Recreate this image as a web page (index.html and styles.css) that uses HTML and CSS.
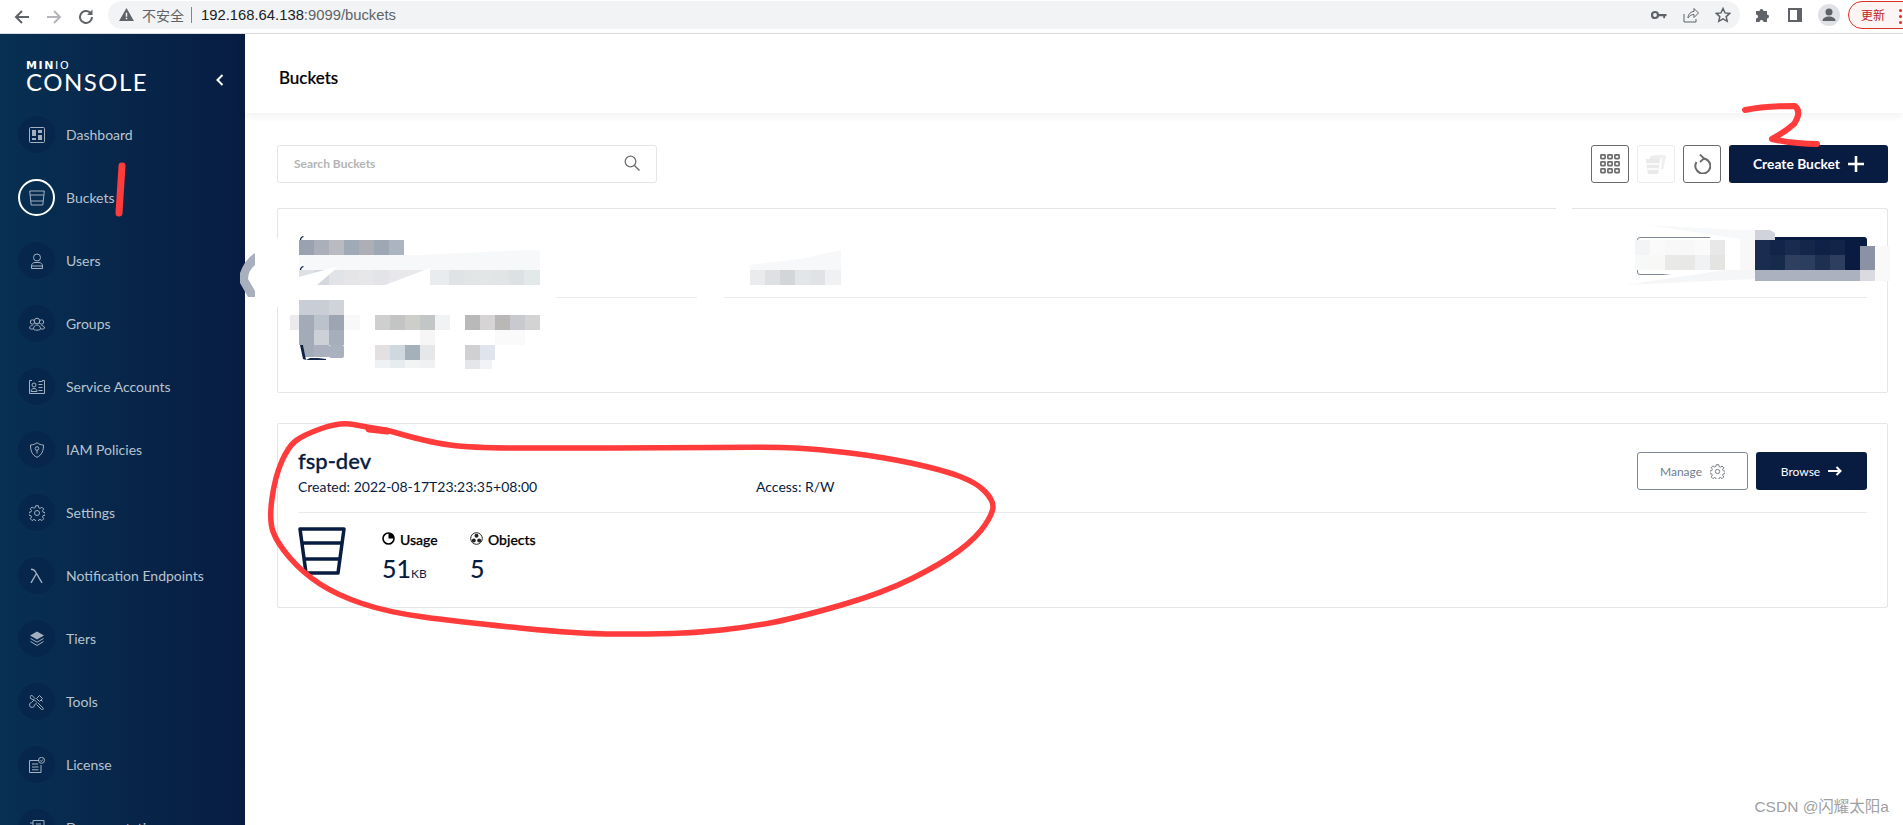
FILE: index.html
```html
<!DOCTYPE html>
<html lang="zh">
<head>
<meta charset="utf-8">
<title>MinIO Console</title>
<link rel="stylesheet" href="styles.css">
</head>
<body>
<header class="chrome">
  <div class="chrome-nav">
    <svg class="chrome-ico" viewBox="0 0 18 18"><path d="M16 9H3M9 3 3 9l6 6" fill="none" stroke="#5f6368" stroke-width="2"/></svg>
    <svg class="chrome-ico" viewBox="0 0 18 18"><path d="M2 9h13M9 3l6 6-6 6" fill="none" stroke="#b4b6b9" stroke-width="2"/></svg>
    <svg class="chrome-ico" viewBox="0 0 18 18"><path d="M15 9a6 6 0 1 1-1.800-4.300" fill="none" stroke="#5f6368" stroke-width="2"/><path d="M15.500 1.500v5.500H10z" fill="#5f6368"/></svg>
  </div>
  <div class="omnibox">
    <svg class="warn" viewBox="0 0 16 14"><path d="M8 0 16 14H0z" fill="#5f6368"/><path d="M7.200 5h1.600v4.500H7.200zM7.200 10.500h1.600V12H7.200z" fill="#f1f3f4"/></svg>
    <span class="insecure">不安全</span>
    <span class="url"><span class="host">192.168.64.138</span>:9099/buckets</span>
    <span class="omni-actions">
      <svg class="omni-ico" viewBox="0 0 16 16"><circle cx="4" cy="8" r="3" fill="none" stroke="#5f6368" stroke-width="2.200"/><path d="M7 7h8.500v2.200H14v2h-1.800V9.200H7z" fill="#5f6368"/></svg>
      <svg class="omni-ico" viewBox="0 0 16 16"><path d="M1 7v8h12v-3M5 11c0-4 3-6.500 6-6.500V1.500l4.500 4.500L11 10.500V7.500C8.500 7.500 6.500 8.500 5 11z" fill="none" stroke="#5f6368" stroke-width="1"/></svg>
      <svg class="omni-ico" viewBox="0 0 16 16"><path d="m8 1.500 2 4.400 4.800.5-3.600 3.200 1 4.700L8 11.900l-4.200 2.400 1-4.700L1.200 6.400 6 5.900z" fill="none" stroke="#5f6368" stroke-width="1.500"/></svg>
    </span>
  </div>
  <div class="chrome-right">
    <svg class="chrome-ico" viewBox="0 0 18 18"><path d="M2 5h3.500a2 2 0 1 1 4 0H13v3.500a2 2 0 1 1 0 4V16H9.500a2 2 0 1 0-4 0H2v-3.500a2 2 0 1 0 0-4z" fill="#5f6368"/></svg>
    <svg class="chrome-ico" viewBox="0 0 18 18"><rect x="2" y="2" width="14" height="14" fill="#5f6368"/><rect x="4" y="4" width="7" height="10" fill="#fff"/></svg>
    <span class="avatar"><svg class="avatar-ico" viewBox="0 0 22 22"><circle cx="11" cy="8" r="3.500" fill="#5f6368"/><path d="M4.500 17c0-3 3-4.500 6.500-4.500s6.500 1.500 6.500 4.500z" fill="#5f6368"/></svg></span>
    <span class="update">更新<span class="dots"><i></i><i></i><i></i></span></span>
  </div>
</header>

<div class="app">
  <aside class="sidebar">
    <div class="brand">
      <div class="logo">
        <div class="logo-minio">MIN<span class="logo-io">IO</span></div>
        <div class="logo-console">CONSOLE</div>
      </div>
      <svg class="collapse" viewBox="0 0 10 14"><path d="M7.500 2 2.500 7l5 5" fill="none" stroke="#fff" stroke-width="2"/></svg>
    </div>
    <nav class="nav">
      <a class="nav-item"><span class="nav-dot"><svg class="nav-ico" viewBox="0 0 16 16"><rect x=".5" y=".5" width="15" height="15" rx="1"/><rect class="solid" x="3" y="3" width="4" height="6"/><rect class="solid" x="9" y="3" width="4" height="3"/><rect class="solid" x="9" y="8" width="4" height="5"/><rect class="solid" x="3" y="11" width="4" height="2"/></svg></span>Dashboard</a>
      <a class="nav-item active"><span class="nav-dot"><svg class="nav-ico" viewBox="0 0 16 16"><path d="M.7 1h14.600l-1.500 14H2.200zM1.200 5h13.600M1.800 11h12.400"/></svg></span>Buckets</a>
      <a class="nav-item"><span class="nav-dot"><svg class="nav-ico" viewBox="0 0 16 16"><circle cx="8" cy="4.500" r="3.500"/><path d="M2.500 15.500v-2.500c0-2 1.500-3.500 3.500-3.500h4c2 0 3.500 1.500 3.500 3.500v2.500zM2.500 13h11"/></svg></span>Users</a>
      <a class="nav-item"><span class="nav-dot"><svg class="nav-ico" viewBox="0 0 16 16"><circle cx="8" cy="5" r="2.800"/><circle cx="3.500" cy="6" r="2.200"/><circle cx="12.500" cy="6" r="2.200"/><path d="M4.500 13c0-2.500 1.500-4 3.500-4s3.500 1.500 3.500 4c0 1.500-7 1.500-7 0zM3.500 9.500C2 9.500.5 10.500.5 12c0 1 2 1.200 3.500 1M12.500 9.500c1.500 0 3 1 3 2.500 0 1-2 1.200-3.500 1"/></svg></span>Groups</a>
      <a class="nav-item"><span class="nav-dot"><svg class="nav-ico" viewBox="0 0 16 16"><path d="M3 1.500H.5v13h15v-13H13"/><circle cx="5" cy="6" r="2"/><path d="M2 12.500c0-2 1.300-3 3-3s3 1 3 3zM9.500 2.500h4M9.500 5.500h4M9.500 8.500h4M9.500 11.500h4"/></svg></span>Service Accounts</a>
      <a class="nav-item"><span class="nav-dot"><svg class="nav-ico" viewBox="0 0 16 16"><path d="M8 .7c2 1.500 4 2.200 6.500 2.300 0 5.500-1.500 10-6.500 12.300C3 13 1.500 8.500 1.500 3 4 2.900 6 2.200 8 .7z"/><circle cx="8" cy="6.500" r="1.800"/><path d="M8 8v3.500"/></svg></span>IAM Policies</a>
      <a class="nav-item"><span class="nav-dot"><svg class="nav-ico" viewBox="0 0 16 16"><circle cx="8" cy="8" r="2.500"/><path d="m6.700.7h2.600l.4 2.100 1.400.6 1.800-1.200 1.800 1.800-1.200 1.800.6 1.400 2.100.4v2.600l-2.100.4-.6 1.400 1.200 1.800-1.800 1.800-1.800-1.200-1.400.6-.4 2.100H6.700l-.4-2.100-1.400-.6-1.800 1.200-1.800-1.800 1.200-1.800-.6-1.400-2.100-.4V7.400l2.100-.4.6-1.400L1.300 3.800l1.800-1.800 1.800 1.200 1.400-.6z"/></svg></span>Settings</a>
      <a class="nav-item"><span class="nav-dot"><svg class="nav-ico lambda" viewBox="0 0 16 16"><path d="M2 1.200c3 0 4 1 5.200 3.800L13 14.800M7.500 5.500 2 14.800"/></svg></span>Notification Endpoints</a>
      <a class="nav-item"><span class="nav-dot"><svg class="nav-ico" viewBox="0 0 16 16"><path class="solid" d="M8 .5 15 4.500 8 8.500 1 4.500z"/><path d="M1.500 7.500 8 11.200l6.500-3.700M1.500 10.500 8 14.500l6.500-4"/></svg></span>Tiers</a>
      <a class="nav-item"><span class="nav-dot"><svg class="nav-ico" viewBox="0 0 16 16"><path d="M2.500 1 6 4.500l-1 1L8 8.500l-2.500 2.500a2.500 2.500 0 1 1-3-2.500L5 6 1.500 4.500A3 3 0 0 1 2.500 1zM10.500 1.500l3 3-3 3-3-3zM9 9l5 5a1 1 0 0 1-1.500 1.500l-5-5M12 6l1.500 1.500"/></svg></span>Tools</a>
      <a class="nav-item"><span class="nav-dot"><svg class="nav-ico" viewBox="0 0 16 16"><path d="M10 3.500H.5v12H12V8M3 7h6M3 10h6.500M3 12.800h6.500"/><circle cx="12.500" cy="3.300" r="3"/><path d="m11 3.300 1.200 1.200 1.700-2"/></svg></span>License</a>
      <a class="nav-item"><span class="nav-dot"><svg class="nav-ico" viewBox="0 0 16 16"><path d="M4 .5h11v15H4zM7 4h5M7 7h5M7 10h5M4 3H1M4 6H1"/></svg></span>Documentation</a>
    </nav>
  </aside>

  <main class="main">
    <div class="page-head"><h1 class="page-title">Buckets</h1></div>
    <div class="content">
      <div class="actions">
        <label class="search">
          <span class="search-text">Search Buckets</span>
          <svg class="search-ico" viewBox="0 0 16 16"><circle cx="6.500" cy="6.500" r="5.300" fill="none" stroke="#6f6f6f" stroke-width="1.300"/><path d="m10.500 10.500 5 5" stroke="#6f6f6f" stroke-width="1.500"/></svg>
        </label>
        <div class="action-buttons">
          <button class="icon-btn"><svg class="grid-ico" viewBox="0 0 20 20"><g fill="none" stroke="#6d6d6d" stroke-width="1.700"><rect x=".9" y=".9" width="4.200" height="3.700" rx=".6"/><rect x="7.900" y=".9" width="4.200" height="3.700" rx=".6"/><rect x="14.900" y=".9" width="4.200" height="3.700" rx=".6"/><rect x=".9" y="7.900" width="4.200" height="3.700" rx=".6"/><rect x="7.900" y="7.900" width="4.200" height="3.700" rx=".6"/><rect x="14.900" y="7.900" width="4.200" height="3.700" rx=".6"/><rect x=".9" y="14.900" width="4.200" height="3.700" rx=".6"/><rect x="7.900" y="14.900" width="4.200" height="3.700" rx=".6"/><rect x="14.900" y="14.900" width="4.200" height="3.700" rx=".6"/></g></svg></button>
          <button class="icon-btn disabled"><svg class="stack-ico" viewBox="0 0 20 20"><path d="M6 1.500 15 .5l5 1-2.500 13-2.500 1L16 4z" fill="#efefef"/><path d="M4 2h10l1 2-1 2H4z" fill="#ededed"/><path d="M0 5h14l-1.800 15H1.800z" fill="#e9e9e9"/><path d="M.8 10h12.400M1.400 15h11.200" stroke="#fff" stroke-width="1.500"/></svg></button>
          <button class="icon-btn"><svg class="refresh-ico" viewBox="0 0 18 20"><path d="M10 4.500A7.500 7.500 0 1 1 3.500 8" fill="none" stroke="#6b6b6b" stroke-width="2"/><path d="M7 .5l4 4-4 3.500" fill="none" stroke="#6b6b6b" stroke-width="1.800"/></svg></button>
          <button class="create-btn">Create Bucket<svg class="plus-ico" viewBox="0 0 16 16"><path d="M8 0v16M0 8h16" stroke="#fff" stroke-width="2.600"/></svg></button>
        </div>
      </div>

      <section class="card">
        <div class="card-head">
          <div class="card-info"></div>
          <div class="card-buttons">
            <button class="btn-outline">Manage<svg class="gear-ico" viewBox="0 0 16 16"><circle cx="8" cy="8" r="2.300"/><path d="m6.700.7h2.600l.4 2.100 1.400.6 1.800-1.200 1.800 1.800-1.200 1.800.6 1.400 2.100.4v2.600l-2.100.4-.6 1.400 1.200 1.800-1.800 1.800-1.800-1.200-1.400.6-.4 2.100H6.700l-.4-2.100-1.400-.6-1.800 1.200-1.800-1.800 1.200-1.800-.6-1.400-2.100-.4V7.400l2.100-.4.6-1.400L1.300 3.800l1.800-1.800 1.800 1.200 1.400-.6z"/></svg></button>
            <button class="btn-dark">Browse<svg class="arrow-ico" viewBox="0 0 14 10"><path d="M0 5h12M8.500 1 12.500 5l-4 4" fill="none" stroke="#fff" stroke-width="2"/></svg></button>
          </div>
        </div>
      </section>

      <section class="card">
        <div class="card-head">
          <div class="card-info">
            <div class="bucket-name">fsp-dev</div>
            <div class="bucket-meta"><span class="meta-created">Created: 2022-08-17T23:23:35+08:00</span><span>Access: R/W</span></div>
          </div>
          <div class="card-buttons">
            <button class="btn-outline">Manage<svg class="gear-ico" viewBox="0 0 16 16"><circle cx="8" cy="8" r="2.300"/><path d="m6.700.7h2.600l.4 2.100 1.400.6 1.800-1.200 1.800 1.800-1.200 1.800.6 1.400 2.100.4v2.600l-2.100.4-.6 1.400 1.200 1.800-1.800 1.800-1.800-1.200-1.400.6-.4 2.100H6.700l-.4-2.100-1.400-.6-1.800 1.200-1.800-1.800 1.200-1.800-.6-1.400-2.100-.4V7.400l2.100-.4.6-1.400L1.300 3.800l1.800-1.800 1.800 1.200 1.400-.6z"/></svg></button>
            <button class="btn-dark">Browse<svg class="arrow-ico" viewBox="0 0 14 10"><path d="M0 5h12M8.500 1 12.500 5l-4 4" fill="none" stroke="#fff" stroke-width="2"/></svg></button>
          </div>
        </div>
        <div class="card-stats">
          <svg class="bucket-ico" viewBox="0 0 48 48"><path d="M2 2h44l-6 44H8zM4.500 16h39M6.500 32h35" fill="none" stroke="#081c42" stroke-width="3.500" stroke-linejoin="round"/></svg>
          <div class="stat">
            <div class="stat-label"><svg class="stat-ico" viewBox="0 0 13 13"><circle cx="6.500" cy="6.500" r="5.500" fill="none" stroke="#000" stroke-width="1.600"/><path d="M6.500 6.500V1a5.500 5.500 0 0 1 5.500 5.500z" fill="#000"/></svg>Usage</div>
            <div class="stat-value">51<span class="stat-unit">KB</span></div>
          </div>
          <div class="stat">
            <div class="stat-label"><svg class="stat-ico" viewBox="0 0 13 13"><circle cx="6.500" cy="6.500" r="5.800" fill="none" stroke="#222" stroke-width="1"/><circle cx="6.500" cy="3.800" r="2" fill="#222"/><circle cx="3.800" cy="8.500" r="2" fill="#222"/><circle cx="9.200" cy="8.500" r="2" fill="#222"/></svg>Objects</div>
            <div class="stat-value">5</div>
          </div>
        </div>
      </section>
    </div>
  </main>
</div>

<svg class="markup" viewBox="0 0 1903 825">
  <!-- redaction smears over the first card -->
  <g fill="#fff">
    <path d="M270 238H540l26 50-20 19H270z"/>
    <path d="M466 290h58v14h-58zM697 290h27v14h-27zM1556 204h16v8h-16z"/>
    <path d="M1707 231 1760 228 1773 237 1775 282 1645 285 1645 277 1725 268z"/>
  </g>
  <g fill="#f7f8f9">
    <path d="M299 255h120l110-5 11 1v19H299z"/>
    <path d="M750 270v-5l50-6 41-9v20z"/>
  </g>
  <g>
    <rect x="299" y="240" width="15" height="15" fill="#9aa1b0"/><rect x="314" y="240" width="15" height="15" fill="#abafba"/><rect x="329" y="240" width="15" height="15" fill="#b9bbc0"/><rect x="344" y="240" width="15" height="15" fill="#9faab6"/><rect x="359" y="240" width="15" height="15" fill="#aeaeb6"/><rect x="374" y="240" width="15" height="15" fill="#9ea8b5"/><rect x="389" y="240" width="15" height="15" fill="#adb4c1"/>
  </g>
  <g>
    <rect x="299" y="270" width="15" height="15" fill="#dde0e4"/><rect x="314" y="270" width="15" height="15" fill="#d4d8de"/><rect x="329" y="270" width="15" height="15" fill="#e2e3e6"/><rect x="344" y="270" width="15" height="15" fill="#e5e5e8"/><rect x="359" y="270" width="15" height="15" fill="#e7e7ea"/><rect x="374" y="270" width="15" height="15" fill="#e3e4e7"/><rect x="389" y="270" width="15" height="15" fill="#e8e7ea"/><rect x="404" y="270" width="15" height="15" fill="#e9e7ea"/><rect x="419" y="270" width="15" height="15" fill="#e9ecec"/><rect x="434" y="270" width="15" height="15" fill="#e9ecee"/><rect x="449" y="270" width="15" height="15" fill="#dfe3e5"/><rect x="464" y="270" width="15" height="15" fill="#e1e5e6"/><rect x="479" y="270" width="15" height="15" fill="#e3e6e7"/><rect x="494" y="270" width="15" height="15" fill="#e2e5e6"/><rect x="509" y="270" width="15" height="15" fill="#dde1e3"/><rect x="524" y="270" width="16" height="15" fill="#e3e8e8"/>
    <path d="M299 285v-8l40-11-22 19zM385 285l45-17v17z" fill="#fff"/>
    <rect x="750" y="270" width="15" height="15" fill="#eaebec"/><rect x="765" y="270" width="15" height="15" fill="#dfe0e3"/><rect x="780" y="270" width="15" height="15" fill="#d2d6d9"/><rect x="795" y="270" width="15" height="15" fill="#e3e6e8"/><rect x="810" y="270" width="15" height="15" fill="#e0e2e5"/><rect x="825" y="270" width="16" height="15" fill="#f0f1f2"/>
  </g>
  <g>
    <rect x="290" y="315" width="9" height="15" fill="#ebebed"/><rect x="344" y="315" width="16" height="15" fill="#f8f8f9"/>
    <rect x="299" y="300" width="15" height="15" fill="#c9cdd5"/><rect x="314" y="300" width="15" height="15" fill="#c9ced6"/><rect x="329" y="300" width="15" height="15" fill="#d0d3da"/>
    <rect x="299" y="315" width="15" height="15" fill="#a3abb8"/><rect x="314" y="315" width="15" height="15" fill="#bcc2cb"/><rect x="329" y="315" width="15" height="15" fill="#9ea5b2"/>
    <rect x="299" y="330" width="15" height="15" fill="#a3abb8"/><rect x="314" y="330" width="15" height="15" fill="#ccd1d8"/><rect x="329" y="330" width="15" height="15" fill="#a6aebb"/>
    <path d="M303 345h11v12h-9z" fill="#a3aab8"/><path d="M300 345l3 14 3 1-3-15z" fill="#0f2146"/><rect x="314" y="345" width="15" height="12" fill="#abb0bf"/><rect x="329" y="345" width="15" height="13" rx="2" fill="#aab1be"/><path d="M306 360h20v-1l-8-1h-8z" fill="#14274a"/>
    <rect x="375" y="315" width="15" height="15" fill="#cfcfcf"/><rect x="390" y="315" width="15" height="15" fill="#c3c5c5"/><rect x="405" y="315" width="15" height="15" fill="#cdcdc9"/><rect x="420" y="315" width="15" height="15" fill="#c3c6c6"/><rect x="435" y="315" width="15" height="15" fill="#f1f2f3"/>
    <rect x="420" y="330" width="15" height="15" fill="#f6f6f6"/>
    <rect x="375" y="345" width="15" height="15" fill="#e2e0e1"/><rect x="390" y="345" width="15" height="15" fill="#cfd8df"/><rect x="405" y="345" width="15" height="15" fill="#a4b0ba"/><rect x="420" y="345" width="15" height="15" fill="#e6e7e9"/>
    <rect x="375" y="360" width="15" height="8" fill="#f0f1f2"/><rect x="390" y="360" width="15" height="8" fill="#e7ecee"/><rect x="405" y="360" width="15" height="8" fill="#f2f4f3"/><rect x="420" y="360" width="15" height="8" fill="#f0f1f2"/>
    <rect x="465" y="315" width="15" height="15" fill="#b9b9b9"/><rect x="480" y="315" width="15" height="15" fill="#d6d4d5"/><rect x="495" y="315" width="15" height="15" fill="#bab8b6"/><rect x="510" y="315" width="15" height="15" fill="#c9cad0"/><rect x="525" y="315" width="15" height="15" fill="#d3d3d3"/>
    <rect x="495" y="330" width="30" height="15" fill="#fafafa"/>
    <rect x="465" y="345" width="15" height="15" fill="#d0d0d2"/><rect x="480" y="345" width="15" height="15" fill="#e0e4ec"/><rect x="465" y="360" width="15" height="9" fill="#e5e6ea"/><rect x="480" y="360" width="12" height="9" fill="#f1f3f6"/>
  </g>
  <path d="M300.500 240c0-2 1-3 3-3.500M300.500 270c0-2 1-3 3-3.500" fill="none" stroke="#0f2146" stroke-width="1.200"/>
  <path d="M255 253v12q-7 6-7 14l7 12v6h-7l-8-14v-10q5-14 15-20z" fill="#a9b0bd"/>
  <g>
    <rect x="1635" y="240" width="15" height="15" fill="#f3f4f5"/><rect x="1650" y="240" width="15" height="15" fill="#fafafa"/><rect x="1665" y="240" width="30" height="15" fill="#f8f8f8"/><rect x="1695" y="240" width="15" height="15" fill="#fafafa"/><rect x="1710" y="240" width="15" height="15" fill="#e8e8e8"/>
    <rect x="1635" y="255" width="15" height="15" fill="#f7f8f8"/><rect x="1650" y="255" width="15" height="15" fill="#f8f8f6"/><rect x="1665" y="255" width="15" height="15" fill="#e9eae8"/><rect x="1680" y="255" width="15" height="15" fill="#e8e8e6"/><rect x="1695" y="255" width="15" height="15" fill="#f1f2f3"/><rect x="1710" y="255" width="15" height="15" fill="#e4e4e3"/>
    <path d="M1625 285l100-15h30v9z" fill="#f5f6f8"/><path d="M1647 225l93 5h15v10h-15v-1z" fill="#f7f8f9"/>
    <rect x="1740" y="240" width="15" height="30" fill="#f8f8f9"/>
    <path d="M1755 230h15l5 3v7h-20z" fill="#d0d3dc"/>
    <rect x="1755" y="240" width="15" height="15" fill="#1a2d50"/><rect x="1770" y="240" width="15" height="15" fill="#122449"/><rect x="1785" y="240" width="15" height="15" fill="#1a2b50"/><rect x="1800" y="240" width="15" height="15" fill="#14274a"/><rect x="1815" y="240" width="15" height="15" fill="#0f2146"/><rect x="1830" y="240" width="15" height="15" fill="#122549"/><rect x="1845" y="240" width="15" height="15" fill="#0a1b42"/>
    <rect x="1755" y="255" width="15" height="15" fill="#1a2d50"/><rect x="1770" y="255" width="15" height="15" fill="#162a4c"/><rect x="1785" y="255" width="15" height="15" fill="#2e3f60"/><rect x="1800" y="255" width="15" height="15" fill="#2c3e60"/><rect x="1815" y="255" width="15" height="15" fill="#1e3051"/><rect x="1830" y="255" width="15" height="15" fill="#2d3e5f"/><rect x="1845" y="255" width="15" height="15" fill="#0a1b42"/>
    <rect x="1755" y="270" width="105" height="11" fill="#abb1be"/><rect x="1860" y="270" width="15" height="11" fill="#d9dbe0"/>
    <rect x="1860" y="246" width="15" height="24" fill="#8b92a3"/><rect x="1875" y="246" width="15" height="35" fill="#f9f9fa"/>
  </g>
  <!-- hand-drawn annotations -->
  <g fill="none" stroke="#ff3b3b" stroke-linecap="round" stroke-linejoin="round">
    <path d="M122 166 119 213" stroke-width="7"/>
    <path d="M1745 110Q1765 106 1795 106 1802 112 1794 124 1785 132 1772 139 1795 144 1817 144" stroke-width="6"/>
    <path d="M390 431Q427 442 450 445Q473 448 516 448Q560 448 610 448Q660 448 716 447.500Q773 447 795 448Q817 449 850 453Q883 457 913 463.500Q943 470 960 476.500Q977 483 985 491.500Q993 500 993 506.500Q993 513 985 525Q977 537 960 550Q943 563 913 578Q883 593 841.500 605Q800 617 775 622Q750 627 721.500 630Q693 633 671.500 633.500Q650 634 615 634Q580 634 520 628Q460 622 423.500 617Q387 612 362 603.500Q337 595 320 584Q303 573 290 558Q277 543 273 531.500Q269 520 272 498.500Q275 477 281.500 462Q288 447 295.500 441Q303 435 321.500 428.500Q340 422 353.500 424.500L367 427 390 431" stroke-width="5.500"/>
    <path d="M369 429 387 431" stroke-width="7"/>
  </g>
</svg>

<div class="watermark">CSDN @闪耀太阳a</div>
</body>
</html>
```

FILE: styles.css
```css
* { box-sizing: border-box; }
html, body { margin: 0; height: 825px; overflow: hidden; background: #fff; }
body { font-family: Lato, "Noto Sans CJK SC", sans-serif; position: relative; display: flex; flex-direction: column; }

/* browser chrome */
.chrome { flex: none; height: 34px; display: flex; align-items: center; border-bottom: 1px solid #dadce0; background: #fff; overflow: hidden; }
.chrome-nav { display: flex; gap: 14px; padding-left: 13px; margin-right: 13px; }
.chrome-ico { width: 18px; height: 18px; display: block; flex: none; }
.omnibox { flex: 1; height: 28px; margin-top: -4px; border-radius: 14px; background: #f1f3f4; display: flex; align-items: center; padding: 0 9px 0 11px; }
.warn { width: 15px; height: 13px; margin-right: 8px; }
.insecure { font: 14px "Noto Sans CJK SC", sans-serif; color: #5f6368; padding-right: 7px; border-right: 1px solid #80868b; line-height: 16px; }
.url { font: 14.800px "Liberation Sans", sans-serif; color: #5f6368; margin-left: 9px; }
.host { color: #202124; }
.omni-actions { margin-left: auto; display: flex; gap: 16px; }
.omni-ico { width: 16px; height: 16px; display: block; }
.chrome-right { flex: none; width: 163px; display: flex; align-items: center; gap: 14px; padding-left: 14px; margin-top: -4px; }
.avatar { width: 22px; height: 22px; flex: none; border-radius: 50%; background: #dfe1e5; }
.avatar-ico { display: block; width: 22px; height: 22px; }
.update { flex: none; margin-left: -6px; width: 72px; height: 28px; border: 1px solid #d93025; border-radius: 14px; background: #fdf5f4; color: #c5221f; font: 12px/26px "Noto Sans CJK SC", sans-serif; padding-left: 12px; display: flex; }
.dots { display: flex; flex-direction: column; gap: 3px; margin: 7px 0 0 14px; }
.dots i { width: 3px; height: 3px; border-radius: 50%; background: #d93025; }

/* app */
.app { flex: 1; min-height: 0; display: flex; }
.sidebar { flex: none; width: 245px; background: linear-gradient(90deg, #073052 0%, #081c42 100%); overflow: hidden; }
.brand { height: 69px; position: relative; padding: 27px 0 0 26px; }
.logo { color: #fff; }
.logo-minio { font: 700 11px/10px "DejaVu Sans", sans-serif; letter-spacing: 1.600px; }
.logo-io { font-weight: 400; }
.logo-console { font: 400 24px/20px Lato, sans-serif; letter-spacing: 1.500px; margin-top: 1px; }
.collapse { position: absolute; left: 215px; top: 39px; width: 10px; height: 14px; }
.nav { display: flex; flex-direction: column; }
.nav-item { height: 63px; flex: none; display: flex; align-items: center; gap: 11px; padding-left: 18px; color: #b9c3cf; font-size: 14px; }
.nav-dot { width: 37px; height: 37px; border-radius: 50%; background: #06274b; display: flex; align-items: center; justify-content: center; flex: none; }
.active .nav-dot { background: transparent; border: 2px solid #fff; }
.nav-ico { width: 16px; height: 16px; fill: none; stroke: #a3b0c0; stroke-width: 1; display: block; }
.nav-ico .solid { fill: #a3b0c0; stroke: none; }
.nav-ico.lambda { stroke-width: 1.400; }

.main { flex: 1; min-width: 0; display: flex; flex-direction: column; }
.page-head { flex: none; height: 79px; display: flex; align-items: center; padding: 7px 0 0 34px; box-shadow: 0 3px 8px rgba(0, 0, 0, .06); }
.page-title { margin: 0; font-size: 17px; font-weight: 500; color: #000; -webkit-text-stroke: .2px #000; }
.content { padding: 32px 15px 0 32px; display: flex; flex-direction: column; }

.actions { display: flex; justify-content: space-between; height: 38px; margin-bottom: 25px; }
.search { width: 380px; border: 1px solid #e5e5e5; border-radius: 3px; display: flex; align-items: center; justify-content: space-between; padding: 0 16px 2px 16px; }
.search-text { font-size: 12px; font-weight: 700; color: #b4b4b4; }
.search-ico { width: 16px; height: 16px; }
.action-buttons { display: flex; gap: 8px; }
button { font-family: inherit; padding: 0; background: #fff; cursor: pointer; }
.icon-btn { width: 38px; height: 38px; border: 1px solid #6b6b6b; border-radius: 3px; display: flex; align-items: center; justify-content: center; }
.icon-btn.disabled { border-color: #ececec; }
.grid-ico { width: 20px; height: 20px; }
.stack-ico { width: 20px; height: 20px; }
.refresh-ico { width: 18px; height: 20px; }
.create-btn { width: 159px; height: 38px; border: 0; border-radius: 3px; background: #081c42; color: #fff; font-size: 13.800px; font-weight: 700; display: flex; align-items: center; justify-content: center; gap: 8px; padding-bottom: 1px; }
.plus-ico { width: 16px; height: 16px; }

.card { height: 185px; margin-bottom: 30px; border: 1px solid #e5e5e5; border-radius: 2px; padding: 28px 19px 0 20px; }
.card-head { height: 61px; display: flex; justify-content: space-between; border-bottom: 1px solid #eaeaea; margin-right: 1px; }
.card-buttons { display: flex; gap: 8px; height: 38px; }
.btn-outline, .btn-dark { width: 111px; height: 38px; border-radius: 3px; font-size: 12px; display: flex; align-items: center; justify-content: center; gap: 8px; }
.btn-outline { background: #fff; border: 1px solid #7e8794; color: #6f7c8c; }
.btn-dark { background: #081c42; border: 0; color: #fff; }
.gear-ico { width: 15px; height: 15px; fill: none; stroke: #6f7680; stroke-width: 1; }
.arrow-ico { width: 14px; height: 10px; }
.card-info { color: #081c42; }
.bucket-name { font-size: 22px; line-height: 24px; font-weight: 500; margin-top: -3px; -webkit-text-stroke: .3px #081c42; }
.bucket-meta { display: flex; font-size: 14px; line-height: 18px; margin-top: 5px; }
.meta-created { width: 458px; }
.card-stats { display: flex; padding-top: 14px; color: #081c42; }
.bucket-ico { width: 48px; height: 48px; margin-right: 36px; flex: none; }
.stat { width: 88px; padding-top: 4px; }
.stat-label { display: flex; align-items: center; gap: 5px; font-size: 14px; font-weight: 500; line-height: 18px; color: #000; white-space: nowrap; -webkit-text-stroke: .25px #000; }
.stat-ico { width: 13px; height: 13px; flex: none; margin-top: -3px; }
.stat-value { font-size: 25px; font-weight: 500; line-height: 30px; margin-top: 4px; }
.stat-unit { font-size: 12px; font-weight: 400; }

.markup { position: absolute; left: 0; top: 0; width: 1903px; height: 825px; pointer-events: none; }
.watermark { position: absolute; right: 14px; top: 797px; font: 15.500px/20px "Liberation Sans", "Noto Sans CJK SC", sans-serif; color: #a0a0a0; }
```
